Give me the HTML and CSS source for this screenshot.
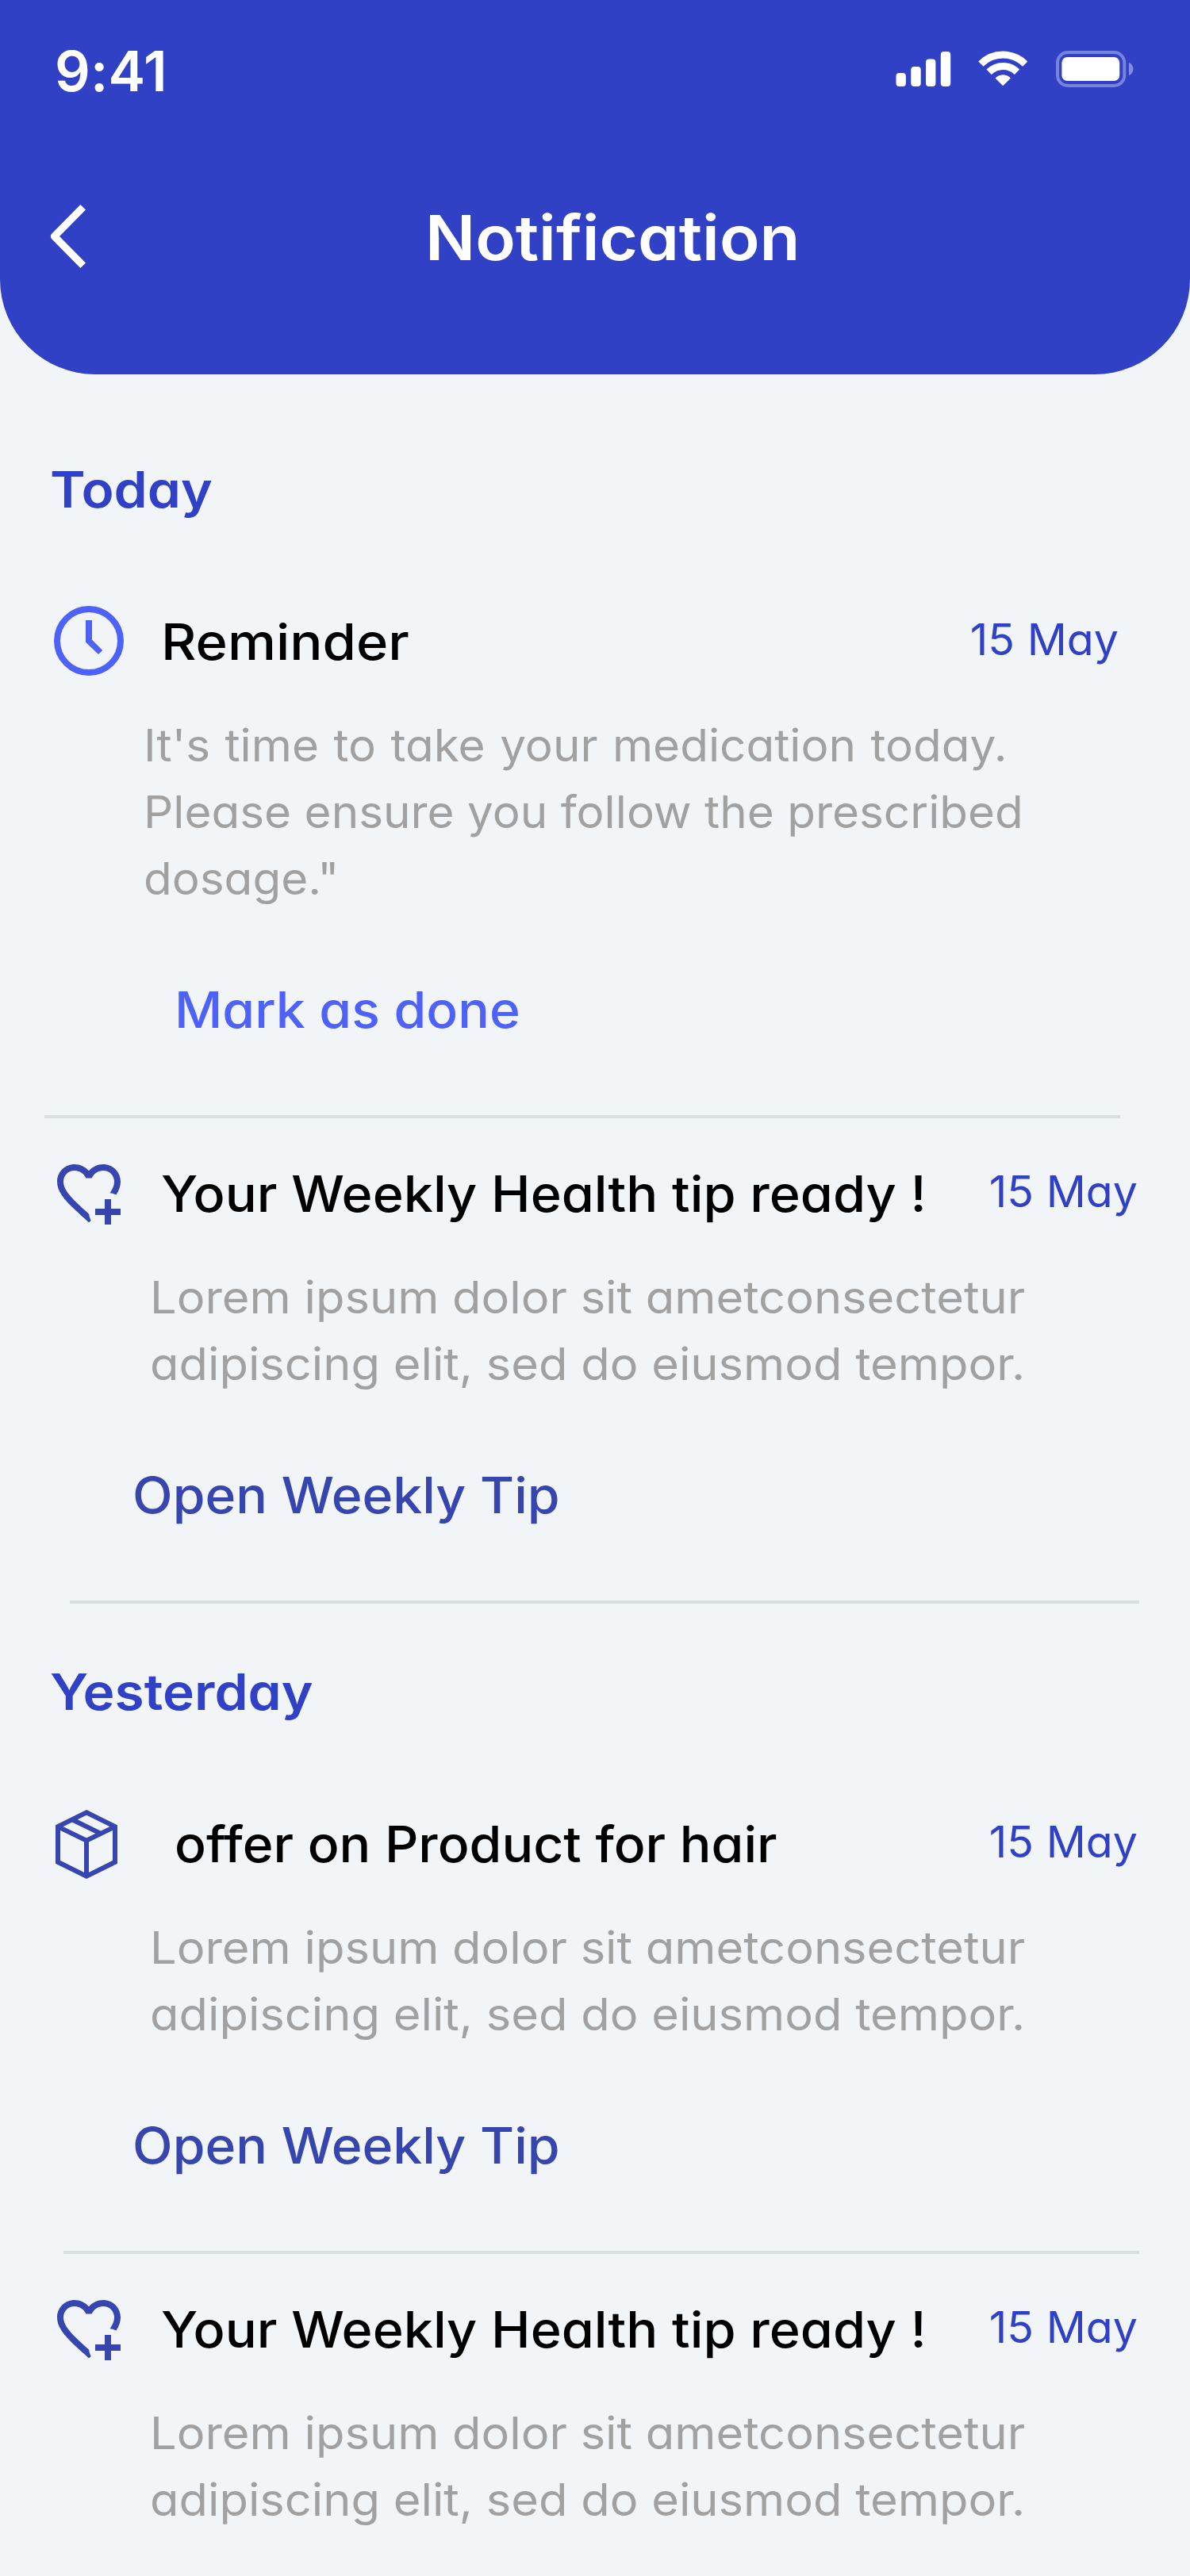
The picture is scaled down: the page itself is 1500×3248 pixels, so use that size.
FILE: index.html
```html
<!DOCTYPE html>
<html lang="en">
<head>
<meta charset="utf-8">
<title>Notification</title>
<link rel="stylesheet" href="styles.css">
</head>
<body>
<svg class="sprite" aria-hidden="true">
  <symbol id="heart-plus" viewBox="0 0 24 24">
    <path fill="currentColor" d="M12.67 20.74L12 21.35L10.55 20.03C5.4 15.36 2 12.27 2 8.5C2 5.41 4.42 3 7.5 3C9.24 3 10.91 3.81 12 5.08C13.09 3.81 14.76 3 16.5 3C19.58 3 22 5.41 22 8.5C22 9.93 21.5 11.26 20.62 12.61C20 12.31 19.34 12.11 18.64 12.04C19.5 10.8 20 9.65 20 8.5C20 6.5 18.5 5 16.5 5C14.96 5 13.46 6 12.93 7.36H11.07C10.54 6 9.04 5 7.5 5C5.5 5 4 6.5 4 8.5C4 11.39 7.14 14.24 11.9 18.55L12 18.65L12.04 18.61C12.12 19.37 12.34 20.09 12.67 20.74M17 14V17H14V19H17V22H19V19H22V17H19V14H17Z"/>
  </symbol>
</svg>
<header class="header">
  <div class="status">
    <span class="clock">9:41</span>
    <div class="status-icons">
      <svg width="71" height="52" viewBox="0 0 71 52" fill="#fff">
        <rect x="0.5" y="32" width="12.4" height="17" rx="4"/>
        <rect x="19.3" y="24" width="12.4" height="25" rx="4"/>
        <rect x="38" y="14.5" width="12.4" height="34.5" rx="4"/>
        <rect x="56.8" y="5" width="12.4" height="44" rx="4"/>
      </svg>
      <svg class="wifi" width="65" height="52" viewBox="0 0 65 52">
        <g fill="none" stroke="#fff" stroke-width="9">
          <path d="M4.4 20.6A39.5 39.5 0 0 1 60.2 20.6"/>
          <path d="M14.6 30.8A25 25 0 0 1 50 30.8"/>
        </g>
        <path fill="#fff" stroke="#fff" stroke-linejoin="round" d="M32.3 47.8L23 38.5A13.4 13.4 0 0 1 41.6 38.5Z"/>
      </svg>
      <svg class="battery" width="98" height="52" viewBox="0 0 98 52" fill="#fff">
        <rect x="2" y="6" width="84.3" height="42" rx="13" fill="none" stroke="#fff" stroke-width="4" opacity=".35"/>
        <rect x="7.4" y="12" width="72.8" height="30" rx="7"/>
        <path opacity=".4" d="M92 19c3.4 1.4 5.5 4.5 5.5 8s-2.1 6.6-5.5 8z"/>
      </svg>
    </div>
  </div>
  <div class="titlebar">
    <svg width="48" height="88" viewBox="0 0 48 88" fill="none" stroke="#fff" stroke-width="9.3" stroke-linejoin="round"><path d="M42.7 7.3L6.5 44L42.7 80.7"/></svg>
    <h1 class="title">Notification</h1>
  </div>
</header>

<main>
  <h2 class="day today">Today</h2>
  <article class="item reminder">
    <div class="row">
      <svg class="icon bright" viewBox="0 0 24 24">
        <circle cx="12" cy="12" r="10" fill="none" stroke="currentColor" stroke-width="2"/>
        <path fill="currentColor" d="M11 5.5H13V11.67L16.33 15L15 16.25L11 12.42Z"/>
      </svg>
      <h3 class="name">Reminder</h3>
      <time class="date">15 May</time>
    </div>
    <p class="text">It's time to take your medication today.<br>Please ensure you follow the prescribed<br>dosage."</p>
    <a class="action bright">Mark as done</a>
  </article>
  <hr class="rule rule-first">
  <article class="item">
    <div class="row">
      <svg class="icon"><use href="#heart-plus"/></svg>
      <h3 class="name">Your Weekly Health tip ready !</h3>
      <time class="date">15 May</time>
    </div>
    <p class="text">Lorem ipsum dolor sit ametconsectetur<br>adipiscing elit, sed do eiusmod tempor.</p>
    <a class="action">Open Weekly Tip</a>
  </article>
  <hr class="rule rule-second">
  <h2 class="day yesterday">Yesterday</h2>
  <article class="item">
    <div class="row">
      <svg class="icon" viewBox="0 0 96 96" fill="none" stroke="currentColor" stroke-width="6">
        <path d="M45 9.3L81 27.1V71.8L45 89.6L9 71.8V27.1ZM9 27.1L45 44.6L81 27.1M45 44.6V89.6M27 18.2L63 35.9"/>
      </svg>
      <h3 class="name offer">offer on Product for hair</h3>
      <time class="date">15 May</time>
    </div>
    <p class="text">Lorem ipsum dolor sit ametconsectetur<br>adipiscing elit, sed do eiusmod tempor.</p>
    <a class="action">Open Weekly Tip</a>
  </article>
  <hr class="rule rule-third">
  <article class="item">
    <div class="row">
      <svg class="icon"><use href="#heart-plus"/></svg>
      <h3 class="name">Your Weekly Health tip ready !</h3>
      <time class="date">15 May</time>
    </div>
    <p class="text">Lorem ipsum dolor sit ametconsectetur<br>adipiscing elit, sed do eiusmod tempor.</p>
  </article>
</main>
</body>
</html>
```
FILE: styles.css
```css
* { box-sizing: border-box; margin: 0; padding: 0; }

body {
  width: 1500px;
  height: 3248px;
  overflow: hidden;
  background: #f1f5f8;
  font-family: Inter, "Open Sans", sans-serif;
  font-feature-settings: "cv11";
  white-space: nowrap;
}

svg { display: block; flex: none; }
.sprite { display: none; }

/* Slightly extended letterforms, stretched from the left edge */
.title, .day, .name, .text, .action {
  width: fit-content;
  transform: scaleX(var(--stretch));
  transform-origin: 0 50%;
}

/* Header */
.header {
  height: 472px;
  padding-top: 50px;
  background: #3041c6;
  border-radius: 0 0 120px 120px;
  color: #fff;
}
.status {
  display: flex;
  justify-content: space-between;
  height: 80px;
  padding: 0 71px 0 69px;
}
.clock {
  font-size: 70px;
  font-weight: 600;
  line-height: 79px;
  letter-spacing: 0.2px;
}
.status-icons { display: flex; padding-top: 10px; }
.wifi { margin-left: 32px; }
.battery { margin-left: 34px; }

.titlebar {
  display: flex;
  align-items: center;
  height: 120px;
  margin-top: 110px;
  padding-left: 62px;
}
.titlebar svg { margin-bottom: 4px; }
.title {
  --stretch: 1.066;
  margin-left: 426px;
  font-size: 78px;
  font-weight: 600;
  line-height: 120px;
}

/* Day headings */
.day {
  --stretch: 1.074;
  margin-left: 63px;
  color: #3041c6;
  font-size: 63px;
  font-weight: 600;
  line-height: 96px;
}
.today { padding-top: 97px; }
.yesterday { padding-top: 63px; }
.day + .item { margin-top: 96px; }

/* Notifications */
.item { color: #3746af; }
.row {
  display: flex;
  align-items: flex-start;
  height: 96px;
  padding: 0 66px 0 64px;
}
.icon { width: 96px; height: 96px; margin-top: -1px; }
.bright { color: #4e62f9; }
.name {
  --stretch: 1.056;
  margin-left: 43px;
  color: #000;
  font-size: 63px;
  font-weight: 500;
  line-height: 96px;
}
.offer { --stretch: 1.049; margin-left: 60px; }
.date {
  margin: 3px 0 0 auto;
  color: #3041c6;
  font-size: 55.5px;
  line-height: 84px;
}
.text {
  --stretch: 1.064;
  margin: 41px 0 0 189px;
  color: #a1a1a1;
  font-size: 56px;
  line-height: 84px;
}
.action {
  --stretch: 1.049;
  display: block;
  margin: 75px 0 0 167px;
  font-size: 63px;
  font-weight: 500;
  line-height: 96px;
}

.reminder .row { padding-right: 90px; }
.reminder .name { --stretch: 1.09; }
.reminder .text { --stretch: 1.043; margin-left: 181px; }
.reminder .text::first-line { word-spacing: 2px; }
.reminder .action { margin-left: 220px; }

/* Dividers */
.rule { height: 4px; border: 0; margin: 85px 64px 0 0; background: #d7e0de; }
.rule-first { margin-right: 88px; margin-left: 56px; }
.rule-second { margin-left: 88px; }
.rule-third { margin-left: 80px; }
.rule + .item { margin-top: 47px; }
```
